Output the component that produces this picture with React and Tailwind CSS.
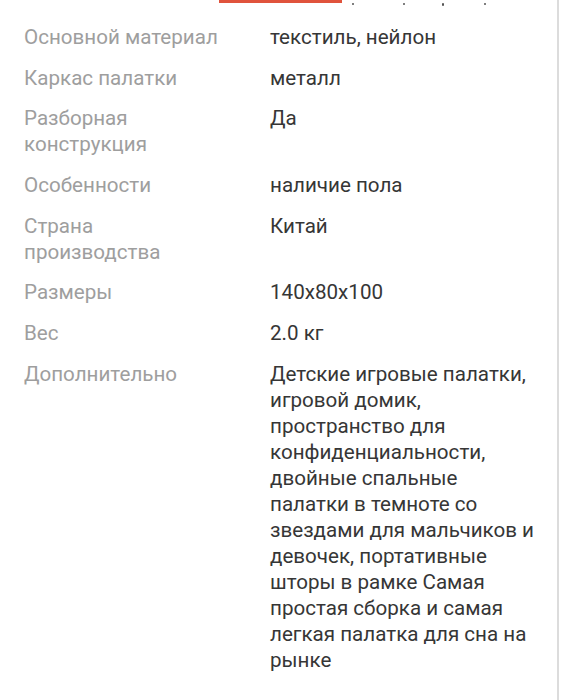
const rows = [
  ["Основной материал", "текстиль, нейлон"],
  ["Каркас палатки", "металл"],
  ["Разборная конструкция", "Да"],
  ["Особенности", "наличие пола"],
  ["Страна производства", "Китай"],
  ["Размеры", "140x80x100"],
  ["Вес", "2.0 кг"],
  [
    "Дополнительно",
    "Детские игровые палатки, игровой домик, пространство для конфиденциальности, двойные спальные палатки в темноте со звездами для мальчиков и девочек, портативные шторы в рамке Самая простая сборка и самая легкая палатка для сна на рынке",
  ],
];

export default function App() {
  return (
    <div className="flex h-[700px] w-[562px] overflow-hidden bg-white font-['Roboto',sans-serif]">
      <div className="flex w-[557px] flex-col">
        <div className="flex h-[24px] items-start">
          <div className="ml-[219px] h-[3px] w-[123px] bg-[#e0533c]" />
          <span className="ml-[10px] mt-[3px] h-[2px] w-[2px] rounded-full bg-[#555]" />
          <span className="ml-[49px] mt-[3px] h-[2px] w-[2px] rounded-full bg-[#555]" />
          <span className="ml-[37px] mt-[3px] h-[3px] w-[2px] rounded-full bg-[#555]" />
          <span className="ml-[40px] mt-[3px] h-[2px] w-[2px] rounded-full bg-[#555]" />
        </div>
        {rows.map(([label, value]) => (
          <div key={label} className="flex pb-[14.7px] text-[20.6px] leading-[26px]">
            <div className="ml-[24px] w-[206px] text-[#9e9e9e]">{label}</div>
            <div className="ml-[40px] w-[270px] text-[#363636]">{value}</div>
          </div>
        ))}
      </div>
      <div className="w-[2px] bg-[#dcdcdc]" />
      <div className="w-[3px]" />
    </div>
  );
}
